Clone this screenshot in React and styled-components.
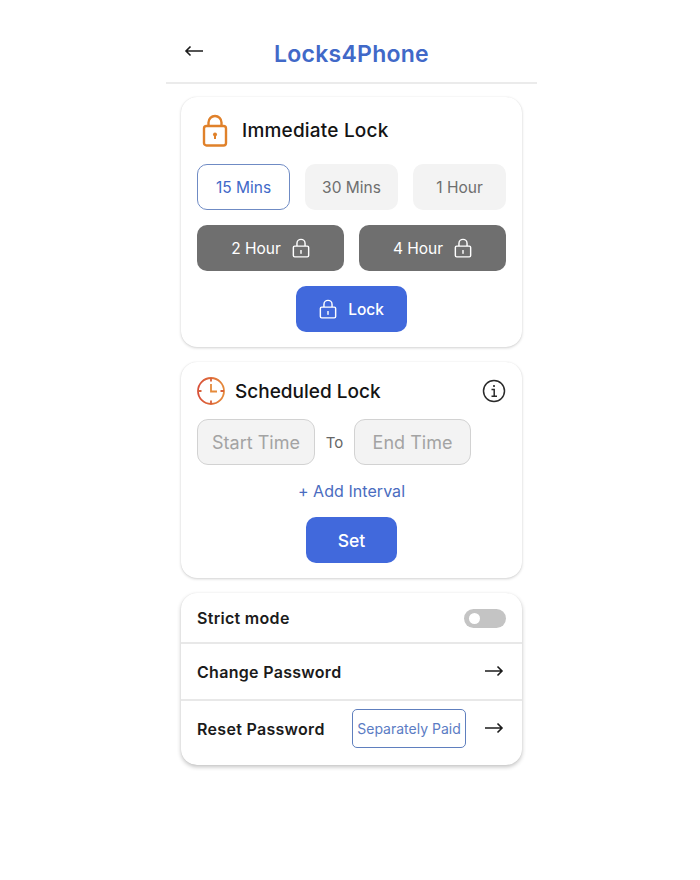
import React from 'react';
import styled, { createGlobalStyle } from 'styled-components';

const GlobalStyle = createGlobalStyle`
  html, body {
    margin: 0;
    padding: 0;
    background: #fff;
    font-family: "Inter", "Liberation Sans", sans-serif;
  }
  * { box-sizing: border-box; }
`;

const Phone = styled.div`
  width: 371px;
  margin: 0 0 0 166px;
  padding-top: 25px;
  height: 880px;
`;

const Header = styled.header`
  position: relative;
  display: flex;
  align-items: center;
  justify-content: center;
  height: 59px;
  border-bottom: 2px solid #ebebeb;
`;

const BackIcon = styled.svg`
  position: absolute;
  left: 18px;
  top: 19px;
`;

const Title = styled.h1`
  margin: 0;
  font-size: 23px;
  font-weight: 600;
  letter-spacing: 0.25px;
  color: #4169c8;
`;

const Cards = styled.main`
  display: flex;
  flex-direction: column;
  gap: 15px;
  padding: 13px 15px 0;
`;

const Card = styled.section`
  background: #fff;
  border-radius: 16px;
  box-shadow: 0 ${props => props.$deep ? '2px 4px rgba(0, 0, 0, 0.24)' : '1px 3px rgba(0, 0, 0, 0.18)'}, 0 0 1px rgba(0, 0, 0, 0.1);
  padding: ${props => props.$flush ? '0' : '15px 16px'};
  height: ${props => props.$height}px;
  overflow: hidden;
`;

const CardHead = styled.div`
  display: flex;
  align-items: center;
  gap: ${props => props.$gap}px;
  height: ${props => props.$height}px;
  margin-bottom: ${props => props.$below}px;
`;

const LockSlot = styled.span`
  display: flex;
  margin-left: 5px;
`;

const CardTitle = styled.h2`
  margin: 0;
  padding-top: 1px;
  flex: 1;
  font-size: 19px;
  font-weight: 500;
  letter-spacing: ${props => props.$spacing}px;
  color: #141414;
`;

const Row = styled.div`
  display: grid;
  grid-template-columns: repeat(${props => props.$cols}, 1fr);
  gap: 15px;
  margin-bottom: 15px;
`;

const Option = styled.button`
  display: flex;
  align-items: center;
  justify-content: center;
  gap: 11px;
  height: 46px;
  padding: 0;
  font: inherit;
  font-size: 15.5px;
  border-radius: 10px;
  color: ${props => props.$selected ? '#4169c8' : props.$locked ? '#fff' : '#6e6e6e'};
  background: ${props => props.$selected ? '#fff' : props.$locked ? '#6f6f6f' : '#f3f3f3'};
  border: ${props => props.$selected ? '1px solid #6f8bc4' : 'none'};
`;

const Center = styled.div`
  display: flex;
  justify-content: center;
`;

const PrimaryButton = styled.button`
  display: flex;
  align-items: center;
  justify-content: center;
  gap: 11px;
  width: ${props => props.$width}px;
  height: 46px;
  padding: 0;
  border: none;
  border-radius: 10px;
  background: #4169dc;
  color: #fff;
  font: inherit;
  font-size: ${props => props.$size}px;
  font-weight: 500;
`;

const TimeRow = styled.div`
  display: flex;
  align-items: center;
  height: 46px;
`;

const TimeField = styled.div`
  display: flex;
  align-items: center;
  justify-content: center;
  width: ${props => props.$width}px;
  height: 46px;
  border: 1px solid #d2d2d2;
  border-radius: 11px;
  background: #f3f3f3;
  color: #a3a3a3;
  font-size: 18px;
`;

const ToLabel = styled.span`
  width: 39px;
  text-align: center;
  font-size: 15px;
  color: #666;
`;

const AddInterval = styled.div`
  height: 52px;
  display: flex;
  align-items: center;
  justify-content: center;
  font-size: 16px;
  letter-spacing: 0.05px;
  color: #4a6cc0;
`;

const SettingRow = styled.div`
  display: flex;
  align-items: center;
  justify-content: space-between;
  height: ${props => props.$height}px;
  padding: ${props => props.$last ? '0 16px 9px' : '1px 16px 0'};
  border-bottom: ${props => props.$last ? 'none' : '2px solid #e8e8e8'};
`;

const SettingLabel = styled.span`
  flex: 1;
  font-size: 16px;
  font-weight: 600;
  letter-spacing: 0.3px;
  color: #1b1b1b;
`;

const Toggle = styled.div`
  position: relative;
  width: 42px;
  height: 19px;
  border-radius: 10px;
  background: #c4c4c4;
`;

const Knob = styled.span`
  position: absolute;
  left: 5px;
  top: 4px;
  width: 11px;
  height: 11px;
  border-radius: 50%;
  background: #fff;
`;

const PaidBadge = styled.span`
  display: flex;
  align-items: center;
  justify-content: center;
  width: 114px;
  height: 39px;
  margin-right: 18px;
  border: 1px solid #5f7fbe;
  border-radius: 5px;
  font-size: 14px;
  white-space: nowrap;
  color: #5b7cc4;
`;

const ArrowIcon = styled.svg`
  display: block;
  flex: none;
  margin-right: 2px;
  margin-bottom: 2px;
`;

const PadlockIcon = ({ size = 20, color = '#fff', width = 1.6 }) => (
  <svg width={size} height={size * 1.1} viewBox="0 0 20 22" fill="none" stroke={color} strokeWidth={width}>
    <rect x="1.5" y="9" width="17" height="12" rx="1.5" />
    <path d="M5.5 9V6a4.5 4.5 0 0 1 9 0v3" />
    <path d="M10 14v3" strokeLinecap="round" />
  </svg>
);

const Arrow = () => (
  <ArrowIcon width="20" height="14" viewBox="0 0 20 14" fill="none" stroke="#1c1c1c" strokeWidth="1.6">
    <path d="M1 7h17M13.5 2.5 18 7l-4.5 4.5" />
  </ArrowIcon>
);

const OrangeLock = () => (
  <svg width="26" height="33" viewBox="0 0 26 33" fill="none" stroke="#e0812a" strokeWidth="2.4">
    <rect x="2" y="12" width="22" height="19.5" rx="2.5" />
    <path d="M6.5 12V8.5a6.5 6.5 0 0 1 13 0V12" />
    <circle cx="13" cy="20.5" r="2" fill="#e0812a" stroke="none" />
    <path d="M13 21v4" strokeWidth="2" />
  </svg>
);

const ClockIcon = () => (
  <svg width="28" height="28" viewBox="0 0 28 28" fill="none" strokeWidth="1.8">
    <defs>
      <linearGradient id="clockStroke" x1="0" y1="0" x2="1" y2="0">
        <stop offset="0" stopColor="#d8503a" />
        <stop offset="1" stopColor="#e58a3a" />
      </linearGradient>
    </defs>
    <circle cx="14" cy="14" r="13" stroke="url(#clockStroke)" />
    <path d="M14 1v3.5M14 23.5V27M1 14h3.5M23.5 14H27" stroke="#d8603a" />
    <path d="M14 7v7.5h6" stroke="#e58a3a" />
  </svg>
);

const InfoIcon = () => (
  <svg width="24" height="24" viewBox="0 0 24 24" fill="none" stroke="#2a2a2a" strokeWidth="1.5">
    <circle cx="12" cy="12" r="10.5" />
    <circle cx="12" cy="7" r="1.1" fill="#2a2a2a" stroke="none" />
    <path d="M9.5 10.5H12.2V17M9.5 17.2h5.5" />
  </svg>
);

export default function App() {
  return (
    <>
      <GlobalStyle />
      <Phone>
        <Header>
          <BackIcon width="20" height="14" viewBox="0 0 20 14" fill="none" stroke="#1c1c1c" strokeWidth="1.6">
            <path d="M19 7H2M6.5 2.5 2 7l4.5 4.5" />
          </BackIcon>
          <Title>Locks4Phone</Title>
        </Header>
        <Cards>
          <Card $height={250}>
            <CardHead $gap={14} $height={36} $below={16}>
              <LockSlot><OrangeLock /></LockSlot>
              <CardTitle $spacing={0.2}>Immediate Lock</CardTitle>
            </CardHead>
            <Row $cols={3}>
              <Option $selected>15 Mins</Option>
              <Option>30 Mins</Option>
              <Option>1 Hour</Option>
            </Row>
            <Row $cols={2}>
              <Option $locked>2 Hour <PadlockIcon size={18} /></Option>
              <Option $locked>4 Hour <PadlockIcon size={18} /></Option>
            </Row>
            <Center>
              <PrimaryButton $width={111} $size={15.5}>
                <PadlockIcon size={18} />
                Lock
              </PrimaryButton>
            </Center>
          </Card>
          <Card $height={216}>
            <CardHead $gap={10} $height={28} $below={14}>
              <ClockIcon />
              <CardTitle $spacing={0}>Scheduled Lock</CardTitle>
              <InfoIcon />
            </CardHead>
            <TimeRow>
              <TimeField $width={118}>Start Time</TimeField>
              <ToLabel>To</ToLabel>
              <TimeField $width={117}>End Time</TimeField>
            </TimeRow>
            <AddInterval>+ Add Interval</AddInterval>
            <Center>
              <PrimaryButton $width={91} $size={17.5}>Set</PrimaryButton>
            </Center>
          </Card>
          <Card $flush $deep $height={172}>
            <SettingRow $height={51}>
              <SettingLabel>Strict mode</SettingLabel>
              <Toggle><Knob /></Toggle>
            </SettingRow>
            <SettingRow $height={57}>
              <SettingLabel>Change Password</SettingLabel>
              <Arrow />
            </SettingRow>
            <SettingRow $height={64} $last>
              <SettingLabel>Reset Password</SettingLabel>
              <PaidBadge>Separately Paid</PaidBadge>
              <Arrow />
            </SettingRow>
          </Card>
        </Cards>
      </Phone>
    </>
  );
}
